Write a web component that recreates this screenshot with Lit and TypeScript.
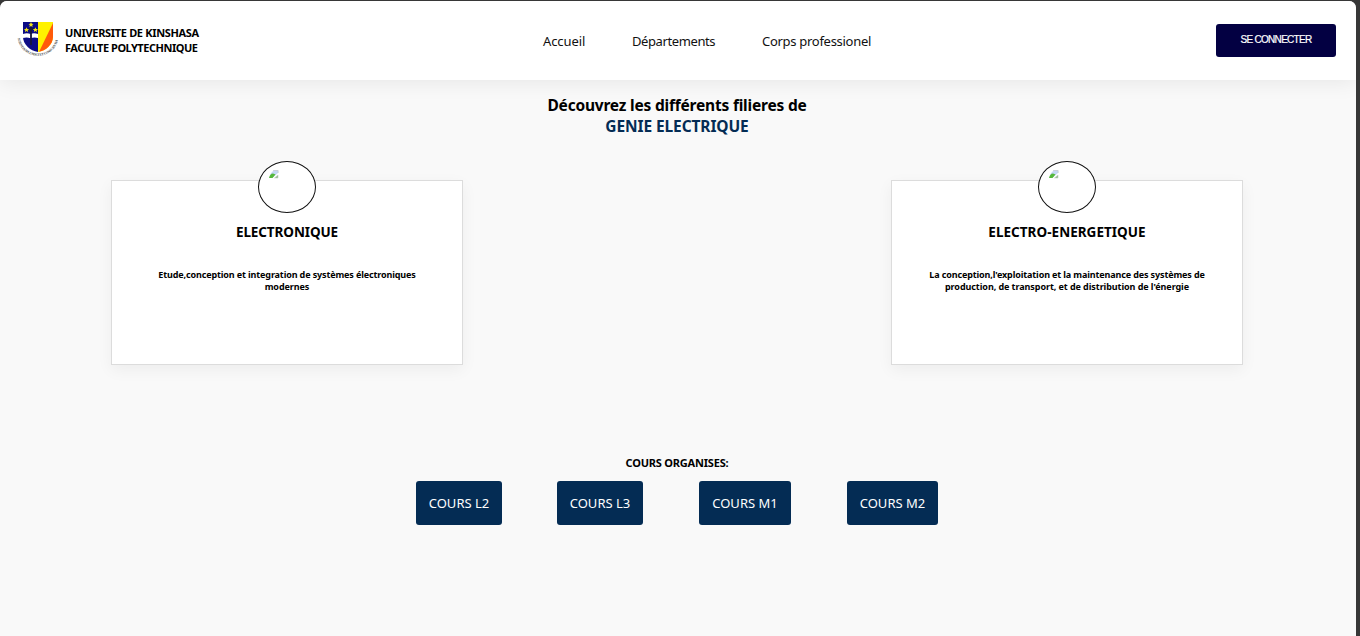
import { LitElement, html, css, svg } from "lit";
import { customElement, property } from "lit/decorators.js";

@customElement("uni-crest")
class UniCrest extends LitElement {
  static styles = css`
    :host { display: block; width: 42px; height: 38px; }
    svg { display: block; }
    .motto { font: bold 3.4px "Liberation Serif", serif; fill: #444; }
  `;
  render() {
    const star = (x: number, y: number) => svg`<path transform="translate(${x} ${y})" fill="#f5e616" d="M0-2.5L.8-.8 2.6-.7 1.2.5 1.6 2.3 0 1.3-1.6 2.3-1.2.5-2.6-.7-.8-.8Z"/>`;
    return html`<svg width="42" height="38" viewBox="0 0 42 38">
      <defs>
        <clipPath id="shield"><path d="M6 2H36V17C36 24 29 31 21 32C13 31 6 24 6 17Z"/></clipPath>
        <path id="arc" d="M.8 18C2 29 11 35.7 21 35.7S40 29 41.2 18"/>
      </defs>
      <g clip-path="url(#shield)">
        <rect width="21" height="38" fill="#0b0b85"/>
        <rect x="21" width="20" height="38" fill="#fff200"/>
        <path d="M37 1V34H21Z" fill="#ff5a0a"/>
        <path d="M6 14Q10 12.5 13.5 14Q17 12.5 21 14V18Q17 17 13.5 18.3Q10 17 6 18Z" fill="#fff"/>
        <path d="M14 7V25M11.5 9H16.5" stroke="#16163c" stroke-width="1.8"/>
        ${star(14, 4.6)}${star(9.5, 9.8)}${star(18.4, 9.8)}
      </g>
      <text class="motto"><textPath href="#arc" textLength="57">SCIENTIA SPLENDET ET CONSCIENTIA</textPath></text>
    </svg>`;
  }
}

@customElement("track-card")
class TrackCard extends LitElement {
  @property() heading = "";
  @property({ type: Array }) lines: string[] = [];
  static styles = css`
    :host {
      display: flex; flex-direction: column; align-items: center; position: relative;
      box-sizing: border-box; width: 352px; height: 185px; padding-top: 41px;
      background: #fff; border: 1px solid #dcdcdc; box-shadow: 0 5px 15px rgba(0, 0, 0, .05);
      white-space: nowrap; text-align: center;
    }
    .avatar {
      position: absolute; top: -20px; left: 146px; box-sizing: border-box; width: 58px; height: 52px;
      border: 1px solid #111; border-radius: 50%; background: #fff;
    }
    .avatar svg { display: block; margin: 8px 0 0 10px; }
    h3 { margin: 0; font-size: 13.5px; line-height: 20px; letter-spacing: -.1px; }
    h3.long { letter-spacing: .03px; }
    p { margin: 27px 0 0; font-size: 9px; line-height: 12px; font-weight: 700; letter-spacing: -.13px; }
    .line:nth-of-type(2) { letter-spacing: -.07px; }
  `;
  render() {
    return html`
      <div class="avatar"><svg width="10" height="9" viewBox="0 0 10 9">
        <path d="M1 6Q1 3 5 .5H9V3L3 8H1Z" fill="#c5d7f5"/>
        <path d="M0 8Q1 3.8 4 3.6L6.5 4.5 3.5 8Z" fill="#55b83b"/>
        <path d="M9 5V8H5.5Z" fill="#8fbf80" stroke="#c8cbd0" stroke-width=".6"/>
        <path d="M4 .5H9.2V3" fill="none" stroke="#c0c3c8" stroke-width=".7"/>
      </svg></div>
      <h3 class=${this.heading.length > 12 ? "long" : ""}>${this.heading}</h3>
      <p>${this.lines.map((l) => html`<span class="line">${l}</span><br>`)}</p>`;
  }
}

@customElement("app-root")
class AppRoot extends LitElement {
  static styles = css`
    :host {
      display: block; box-sizing: border-box; width: 1360px; height: 636px; padding: 1px 4px 0 0; overflow: hidden;
      background: #373737; color: #000; font-family: "Segoe UI", "Noto Sans", sans-serif; white-space: nowrap;
    }
    .page { height: 635px; background: #f9f9f9; border-radius: 7px 7px 0 0; overflow: hidden; }
    header {
      display: grid; grid-template-columns: 526px 1fr auto; box-sizing: border-box; height: 79px;
      padding: 0 20px 0 17px; background: #fff; box-shadow: 0 2px 20px rgba(0, 0, 0, .08);
    }
    .brand { display: flex; gap: 6px; padding-top: 19px; }
    .brand-name { padding-top: 5px; font-size: 11px; line-height: 15px; font-weight: 700; }
    .b1 { letter-spacing: -.33px; }
    .b2 { letter-spacing: -.48px; }
    nav {
      display: grid; grid-template-columns: 89px 130px auto; justify-content: start; padding-top: 30px;
      font-size: 13px; line-height: 20px; color: #111;
    }
    .n1 { letter-spacing: -.1px; }
    .n2 { letter-spacing: -.4px; }
    .n3 { letter-spacing: -.29px; }
    .login {
      box-sizing: border-box; width: 120px; height: 33px; margin-top: 23px; padding: 0 0 2px;
      border: 0; border-radius: 3px; background: #030042; color: #fff;
      font: 10px "Liberation Sans", Arial, sans-serif; letter-spacing: -.7px;
      -webkit-text-stroke: .2px #fff;
    }
    h1 { margin: 14px 0 0; font-size: 15.5px; line-height: 21px; text-align: center; padding: 1px 2px 0 0; letter-spacing: -.2px; }
    .accent { color: #042c54; letter-spacing: -.1px; }
    .tracks { display: flex; justify-content: space-between; padding: 43px 113px 0 111px; }
    h2 { margin: 88px 2px 0 0; font-size: 11px; line-height: 20px; text-align: center; letter-spacing: -.2px; }
    .courses { display: flex; padding: 8px 0 0 416px; }
    .course {
      display: flex; align-items: center; justify-content: center; height: 44px; width: 86px; margin-right: 55px;
      border-radius: 3px; background: #042c54; color: #fff; font-size: 13px;
    }
    .l3 { margin-right: 56px; }
    .m1 { width: 92px; margin-right: 56px; }
    .m2 { width: 91px; margin-right: 0; }
  `;
  render() {
    return html`<div class="page">
      <header>
        <div class="brand"><uni-crest></uni-crest>
          <div class="brand-name"><span class="b1">UNIVERSITE DE KINSHASA</span><br><span class="b2">FACULTE POLYTECHNIQUE</span></div>
        </div>
        <nav><span class="n1">Accueil</span><span class="n2">Départements</span><span class="n3">Corps professionel</span></nav>
        <button class="login"><span>SE CONNECTER</span></button>
      </header>
      <h1><span>Découvrez les différents filieres de</span><br><span class="accent">GENIE ELECTRIQUE</span></h1>
      <div class="tracks">
        <track-card heading="ELECTRONIQUE" .lines=${["Etude,conception et integration de systèmes électroniques", "modernes"]}></track-card>
        <track-card heading="ELECTRO-ENERGETIQUE" .lines=${["La conception,l'exploitation et la maintenance des systèmes de", "production, de transport, et de distribution de l'énergie"]}></track-card>
      </div>
      <h2><span>COURS ORGANISES:</span></h2>
      <div class="courses">
        <span class="course">COURS L2</span><span class="course l3">COURS L3</span><span class="course m1">COURS M1</span><span class="course m2">COURS M2</span>
      </div>
    </div>`;
  }
}
